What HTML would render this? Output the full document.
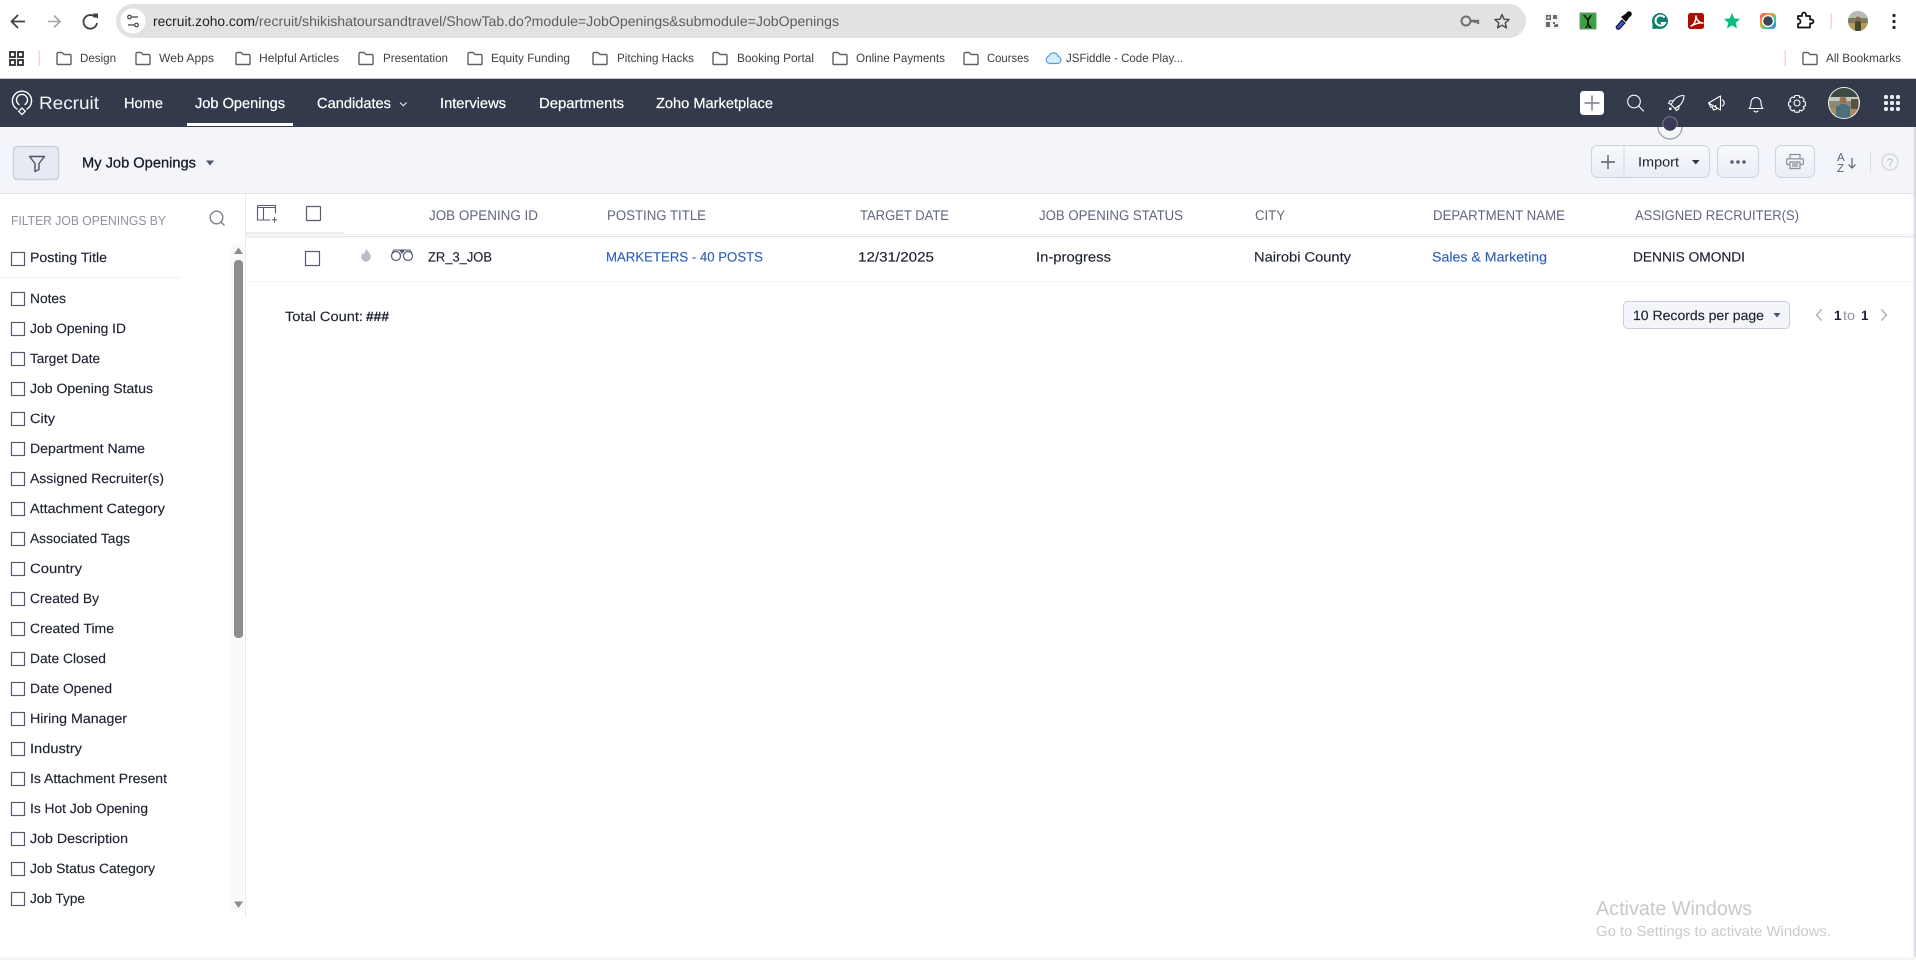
<!DOCTYPE html>
<html lang="en"><head><meta charset="utf-8"><title>Job Openings</title>
<style>
html,body{margin:0;padding:0;background:#fff;width:1916px;height:960px;overflow:hidden}
svg{display:block}
text{font-family:"Liberation Sans",sans-serif;white-space:pre}
.bm{font-size:12px;fill:#3c4043}
.nav{font-size:14.5px;fill:#fff;stroke:#fff;stroke-width:.22}
.hd{font-size:14px;fill:#60667f}
.it{font-size:13.5px;fill:#1d2230;stroke:#1d2230;stroke-width:.15}
.lnk{font-size:13.5px;fill:#2a5bb8;stroke:#2a5bb8;stroke-width:.1}
.cb{fill:#fff;stroke:#555a70;stroke-width:1.2}
.ic{fill:none;stroke:#fff;stroke-width:1.1;stroke-linecap:round;stroke-linejoin:round}
.fo{fill:none;stroke:#5f6368;stroke-width:1.4;stroke-linejoin:round}
</style></head><body>
<svg xmlns="http://www.w3.org/2000/svg" width="1916" height="960" viewBox="0 0 1916 960" shape-rendering="geometricPrecision" text-rendering="geometricPrecision">
<defs>
<symbol id="f" viewBox="0 0 16 14" overflow="visible"><path class="fo" d="M1 12.5V2.2C1 1.5 1.5 1 2.2 1H6l2 2h5.8c.7 0 1.2.5 1.2 1.2v8.3c0 .3-.3.5-.5.5h-13c-.3 0-.5-.2-.5-.5z"/></symbol>
<linearGradient id="btn" x1="0" y1="0" x2="0" y2="1"><stop offset="0" stop-color="#f8f9fc"/><stop offset="1" stop-color="#e9edf5"/></linearGradient>
<linearGradient id="edge" x1="0" y1="0" x2="1" y2="0"><stop offset="0" stop-color="#fff" stop-opacity="0"/><stop offset="1" stop-color="#c9cbd3"/></linearGradient>
<linearGradient id="rb" x1="0" y1="0" x2="1" y2="1"><stop offset="0" stop-color="#f0359a"/><stop offset=".35" stop-color="#f7a21b"/><stop offset=".65" stop-color="#37c8a0"/><stop offset="1" stop-color="#3a6cf0"/></linearGradient>
<clipPath id="av"><circle cx="1844" cy="103" r="15"/></clipPath>
<clipPath id="av2"><circle cx="1858" cy="21" r="10"/></clipPath>
</defs>
<rect width="1916" height="960" fill="#fff"/>

<!-- browser toolbar -->
<path d="M25 21.5H12M18 15l-6.5 6.5L18 28" fill="none" stroke="#3c4043" stroke-width="1.7"/>
<path d="M60 21.5H48M54 15.5l6 6-6 6" fill="none" stroke="#a3a5a8" stroke-width="1.6"/>
<path d="M95.5 17.5A6.8 6.8 0 1 0 97 23" fill="none" stroke="#3c4043" stroke-width="1.8"/><path d="M92.5 13.5h5.5v5.5z" fill="#3c4043"/>
<rect x="116" y="4" width="1410" height="34" rx="17" fill="#e2e2e2"/>
<circle cx="133" cy="21" r="12.5" fill="#fff"/>
<path d="M132 17h6M128 25h6" stroke="#3c4043" stroke-width="1.3"/><circle cx="129.500" cy="17" r="1.800" fill="none" stroke="#3c4043" stroke-width="1.200"/><circle cx="136.500" cy="25" r="1.800" fill="none" stroke="#3c4043" stroke-width="1.200"/>
<text x="153" y="26" font-size="14" fill="#1f1f1f" textLength="102" lengthAdjust="spacingAndGlyphs">recruit.zoho.com</text>
<text x="255" y="26" font-size="14" fill="#5b5e63" textLength="584" lengthAdjust="spacingAndGlyphs">/recruit/shikishatoursandtravel/ShowTab.do?module=JobOpenings&amp;submodule=JobOpenings</text>
<circle cx="1466" cy="21" r="4.500" fill="none" stroke="#6b6e72" stroke-width="2"/><path d="M1470 21h8v3M1475 21v2" fill="none" stroke="#6b6e72" stroke-width="2.400"/>
<path d="M1502 14.500l2 4.700 5.100.4-3.900 3.300 1.200 5-4.400-2.700-4.400 2.700 1.200-5-3.900-3.300 5.100-.4z" fill="none" stroke="#45484c" stroke-width="1.400" stroke-linejoin="round"/>

<!-- extensions -->
<rect x="1544" y="13" width="16" height="16" fill="#f3f3f3"/>
<path d="M1546 15h5v5h-5zM1553 15h4v4h-4zM1546 22h4v5h-4zM1553 22h2v2h-2zM1556 24h2v3h-4v-2z" fill="#6a6a6a"/><path d="M1547.500 16.500h2v2h-2z" fill="#fff"/>
<rect x="1580" y="13" width="16" height="16" fill="#35a43a" stroke="#7c8c7c"/>
<path d="M1583 15l4 5v5l-2 3h2l1-3 1 3h3l-3-4v-4l3-5h-1.500l-2.500 3h-1l-2-3z" fill="#101510"/>
<path d="M1617 29l-1-2 6-7 3 3-6 6.500z" fill="#3a55c9" stroke="#111" stroke-width="1"/><path d="M1621 17l7-5 3 3-5 7z" fill="#0d0d0d"/><circle cx="1629" cy="14" r="2.800" fill="#0d0d0d"/>
<circle cx="1660" cy="21" r="7.500" fill="#fff" stroke="#0f7f6e" stroke-width="1"/>
<path d="M1652.500 29V21a7.500 7.500 0 1 1 7.500 7.500z" fill="#0f7f6e"/><path d="M1664.500 17.500a5 5 0 1 0 .4 5.500h-4" fill="none" stroke="#fff" stroke-width="2"/>
<rect x="1688" y="13" width="16" height="16" rx="2.500" fill="#ad0b00"/>
<path d="M1691 26c3-1 5-5 5-10 0 3 3 7 7 7-3-.5-8 .5-12 3z" fill="none" stroke="#fff" stroke-width="1.500" stroke-linejoin="round"/>
<path d="M1732 13l2.300 5.500 5.900.4-4.500 3.800 1.400 5.800-5.100-3.100-5.100 3.100 1.400-5.800-4.500-3.800 5.900-.4z" fill="#08bd80"/>
<rect x="1760" y="13" width="16" height="16" rx="4" fill="url(#rb)"/><circle cx="1768" cy="21" r="5.500" fill="#3b4554" stroke="#fff" stroke-width="1.400"/>
<path d="M1798 16h4v-1.500a2 2 0 0 1 4 0V16h4v3.500h1.500a2 2 0 0 1 0 4H1810V27.500h-12V24a2.500 2.500 0 0 0 0-5z" fill="none" stroke="#111" stroke-width="1.700" stroke-linejoin="round"/>
<rect x="1830.500" y="13" width="1.500" height="16" fill="#f6d3e3"/>
<circle cx="1858" cy="21" r="10" fill="#7b7c60"/><g clip-path="url(#av2)"><rect x="1848" y="11" width="20" height="7" fill="#b5bcb4"/><rect x="1848" y="23" width="20" height="8" fill="#b89a54"/><path d="M1855 31v-9l3-2 3 2v9z" fill="#3e4a34"/><circle cx="1858" cy="19" r="2.500" fill="#8e6443"/></g>
<circle cx="1894" cy="15.500" r="1.600" fill="#222"/><circle cx="1894" cy="21.500" r="1.600" fill="#222"/><circle cx="1894" cy="27.500" r="1.600" fill="#222"/>

<!-- bookmarks -->
<g fill="none" stroke="#2a2d31" stroke-width="1.800"><rect x="10" y="52" width="5" height="5"/><rect x="18" y="52" width="5" height="5"/><rect x="10" y="60" width="5" height="5"/><rect x="18" y="60" width="5" height="5"/></g>
<rect x="38.500" y="50" width="1.500" height="16" fill="#f6d3e3"/>
<use href="#f" x="56" y="51.500" width="16" height="14"/><text class="bm" x="80" y="62" textLength="36" lengthAdjust="spacingAndGlyphs">Design</text>
<use href="#f" x="135" y="51.500" width="16" height="14"/><text class="bm" x="159" y="62" textLength="55" lengthAdjust="spacingAndGlyphs">Web Apps</text>
<use href="#f" x="235" y="51.500" width="16" height="14"/><text class="bm" x="259" y="62" textLength="80" lengthAdjust="spacingAndGlyphs">Helpful Articles</text>
<use href="#f" x="358" y="51.500" width="16" height="14"/><text class="bm" x="383" y="62" textLength="65" lengthAdjust="spacingAndGlyphs">Presentation</text>
<use href="#f" x="467" y="51.500" width="16" height="14"/><text class="bm" x="491" y="62" textLength="79" lengthAdjust="spacingAndGlyphs">Equity Funding</text>
<use href="#f" x="592" y="51.500" width="16" height="14"/><text class="bm" x="617" y="62" textLength="77" lengthAdjust="spacingAndGlyphs">Pitching Hacks</text>
<use href="#f" x="712" y="51.500" width="16" height="14"/><text class="bm" x="737" y="62" textLength="77" lengthAdjust="spacingAndGlyphs">Booking Portal</text>
<use href="#f" x="832" y="51.500" width="16" height="14"/><text class="bm" x="856" y="62" textLength="89" lengthAdjust="spacingAndGlyphs">Online Payments</text>
<use href="#f" x="963" y="51.500" width="16" height="14"/><text class="bm" x="987" y="62" textLength="42" lengthAdjust="spacingAndGlyphs">Courses</text>
<path d="M1050 63.500h7.500a3.500 3.500 0 0 0 .8-6.900 5 5 0 0 0-9.500-.5 3.800 3.800 0 0 0 1.200 7.400z" fill="#d8ecfa" stroke="#4b9be0" stroke-width="1.200"/>
<text class="bm" x="1066" y="62" textLength="117" lengthAdjust="spacingAndGlyphs">JSFiddle - Code Play...</text>
<rect x="1784.500" y="50" width="1.500" height="16" fill="#f6d3e3"/>
<use href="#f" x="1802" y="51.500" width="16" height="14"/><text class="bm" x="1826" y="62" textLength="75" lengthAdjust="spacingAndGlyphs">All Bookmarks</text>

<!-- nav -->
<rect x="0" y="78" width="1916" height="1" fill="#c4c4c4"/>
<rect x="0" y="79" width="1916" height="48" fill="#323a4b"/>
<path d="M17 109a9.600 9.600 0 1 1 10 0M19 104.500a5.500 5.500 0 1 1 6 0" fill="none" stroke="#fff" stroke-width="1.400" stroke-linecap="round"/>
<path d="M22 108l3.300 3.300-3.300 3.300-3.300-3.300z" fill="none" stroke="#fff" stroke-width="1.300"/>
<text x="39" y="109" font-size="18" fill="#f4f5f7" textLength="60" lengthAdjust="spacingAndGlyphs">Recruit</text>
<text class="nav" x="124" y="108" textLength="39" lengthAdjust="spacingAndGlyphs">Home</text>
<text class="nav" x="195" y="108" textLength="90" lengthAdjust="spacingAndGlyphs">Job Openings</text>
<rect x="187" y="123" width="106" height="3" fill="#fff"/>
<text class="nav" x="317" y="108" textLength="74" lengthAdjust="spacingAndGlyphs">Candidates</text>
<path d="M400 102.500l3.300 3.300 3.300-3.300" fill="none" stroke="#dfe2e8" stroke-width="1.200"/>
<text class="nav" x="440" y="108" textLength="66" lengthAdjust="spacingAndGlyphs">Interviews</text>
<text class="nav" x="539" y="108" textLength="85" lengthAdjust="spacingAndGlyphs">Departments</text>
<text class="nav" x="656" y="108" textLength="117" lengthAdjust="spacingAndGlyphs">Zoho Marketplace</text>

<rect x="1580" y="91" width="24" height="24" rx="3.500" fill="#fff"/>
<path d="M1592 95.500v15M1584.500 103h15" stroke="#8a8e98" stroke-width="1.700"/>
<circle cx="1634" cy="101.500" r="6.300" class="ic"/><path d="M1638.500 106l5 5" class="ic"/>
<path class="ic" d="M1684 95.500c-4 0-7.500 1.500-10 4.500l-3 4.500 4 4 4.500-3c2.800-2.600 4.500-6 4.500-10zM1673.500 100.500l-3.500.3-1.500 2.500 2.500 1.200M1679 105.500l-.3 3.500-2.500 1.500-1.200-2.500"/><rect x="1669" y="107.500" width="2.500" height="2.500" fill="#fff"/>
<path class="ic" d="M1708.500 103l12-7v14zM1708.500 103l2.500 4.500M1722.500 100a3.500 3.500 0 0 1 0 6M1712 106.500l1.500 3.500 3-1-1-3.500"/>
<path class="ic" d="M1749 108.500c1.500-1.500 2-3 2-6a5 5 0 0 1 10 0c0 3 .5 4.500 2 6zM1754 111c1 1.300 3 1.300 4 0"/>
<circle cx="1797" cy="103" r="3" class="ic"/>
<path class="ic" d="M1795 95.500h4l.7 2.200 2-.8 2.500 2.500-1 2 2.200 .7v3.700l-2.200.7 1 2-2.500 2.500-2-1-.7 2.200h-4l-.7-2.200-2 1-2.500-2.500 1-2-2.200-.7v-3.700l2.200-.7-1-2 2.500-2.500 2 .8z"/>
<circle cx="1844" cy="103" r="16" fill="#f2f2f2"/><circle cx="1844" cy="103" r="15" fill="#8b8a76"/>
<g clip-path="url(#av)"><rect x="1829" y="88" width="30" height="9" fill="#3b4a45"/><rect x="1829" y="97" width="30" height="4" fill="#c5c9c0"/><rect x="1829" y="108" width="30" height="11" fill="#a98d5e"/><path d="M1836 119v-12l5-3h4l5 3v12z" fill="#4c6f7c"/><circle cx="1843" cy="100" r="3.500" fill="#9b6f4d"/><rect x="1851" y="99" width="7" height="10" fill="#5b5140"/></g>
<g fill="#e9eaee"><rect x="1884" y="95" width="4" height="4" rx="1.500"/><rect x="1890" y="95" width="4" height="4" rx="1.500"/><rect x="1896" y="95" width="4" height="4" rx="1.500"/><rect x="1884" y="101" width="4" height="4" rx="1.500"/><rect x="1890" y="101" width="4" height="4" rx="1.500"/><rect x="1896" y="101" width="4" height="4" rx="1.500"/><rect x="1884" y="107" width="4" height="4" rx="1.500"/><rect x="1890" y="107" width="4" height="4" rx="1.500"/><rect x="1896" y="107" width="4" height="4" rx="1.500"/></g>

<!-- subheader -->
<rect x="0" y="127" width="1916" height="66" fill="#f3f5fa"/>
<rect x="0" y="193" width="1916" height="1" fill="#dfe3ea"/>
<path d="M1658 127a12 12 0 0 0 24 0" fill="#f3f5fa" stroke="#9a9ca6" stroke-width="1.200"/>
<circle cx="1670" cy="124" r="7.800" fill="#fff" opacity=".35"/>
<circle cx="1670" cy="124" r="6.800" fill="#393a5a"/>
<rect x="13.500" y="146.500" width="45" height="33" rx="4" fill="#e6eaf3" stroke="#c7d0de" stroke-width="1.500"/>
<path d="M29.500 156.500h15l-5.500 7v6l-4 2v-8z" fill="none" stroke="#4d5468" stroke-width="1.400" stroke-linejoin="round"/>
<text x="82" y="167.500" font-size="14.500" fill="#161a26" stroke="#161a26" stroke-width=".3" textLength="114" lengthAdjust="spacingAndGlyphs">My Job Openings</text>
<path d="M206 160.500h8l-4 5z" fill="#4d5468"/>

<rect x="1591.500" y="145.500" width="118" height="32" rx="6" fill="url(#btn)" stroke="#ccd2df" stroke-width="1"/>
<rect x="1623.500" y="146" width="1" height="31" fill="#d3d8e3"/>
<path d="M1608 155v14M1601 162h14" stroke="#5a6176" stroke-width="1.400"/>
<text x="1638" y="166.500" font-size="13.500" fill="#1d2230" textLength="41" lengthAdjust="spacingAndGlyphs">Import</text>
<path d="M1692 160h7.500l-3.750 4.500z" fill="#2f3548"/>
<rect x="1717.500" y="145.500" width="41" height="32" rx="6" fill="url(#btn)" stroke="#ccd2df" stroke-width="1"/>
<circle cx="1732" cy="162" r="1.800" fill="#5a6176"/><circle cx="1738" cy="162" r="1.800" fill="#5a6176"/><circle cx="1744" cy="162" r="1.800" fill="#5a6176"/>
<rect x="1775.500" y="145.500" width="39" height="32" rx="6" fill="url(#btn)" stroke="#ccd2df" stroke-width="1"/>
<path d="M1790 159v-4.500h10v4.500M1790 164.500h-2.500a.8.8 0 0 1-.8-.8v-4c0-.5.3-.8.8-.8h15c.5 0 .8.3.8.8v4c0 .4-.3.8-.8.8H1800M1790 162h10v6.500h-10zM1792 164h6M1792 166h6" fill="none" stroke="#8a8f9e" stroke-width="1.200"/>
<text x="1837" y="161" font-size="11.500" fill="#5a6176">A</text><text x="1837" y="172" font-size="11.500" fill="#5a6176">Z</text>
<path d="M1852 158v10M1848.500 164.500l3.500 3.500 3.500-3.500" fill="none" stroke="#5a6176" stroke-width="1.200"/>
<rect x="1870" y="152" width="1" height="20" fill="#d8dce5"/>
<circle cx="1890" cy="162" r="8" fill="none" stroke="#d0d3da" stroke-width="1.200"/>
<text x="1886.800" y="166.500" font-size="11.500" fill="#b5b8c0">?</text>

<!-- sidebar -->
<rect x="245" y="194" width="1" height="723" fill="#e9eaee"/>
<text x="11" y="225" font-size="13" fill="#8f939e" textLength="155" lengthAdjust="spacingAndGlyphs">FILTER JOB OPENINGS BY</text>
<circle cx="216.500" cy="217.500" r="6.300" fill="none" stroke="#7c808c" stroke-width="1.400"/><path d="M221 222l3.500 3.500" stroke="#7c808c" stroke-width="1.400"/>
<rect x="231" y="244" width="13" height="668" fill="#fafafa"/>
<path d="M234 254l4.500-6.500 4.500 6.500z" fill="#8d8d8d"/>
<rect x="234" y="260" width="9" height="378" rx="4" fill="#8d8d8d"/>
<path d="M234 901.500l4.500 6.500 4.500-6.500z" fill="#8d8d8d"/>
<rect x="0" y="277" width="181" height="1" fill="#f0f1f3"/>

<rect class="cb" x="11.500" y="252.500" width="13" height="13"/><text class="it" x="30" y="262" textLength="77" lengthAdjust="spacingAndGlyphs">Posting Title</text>
<rect class="cb" x="11.500" y="292.500" width="13" height="13"/><text class="it" x="30" y="303" textLength="36" lengthAdjust="spacingAndGlyphs">Notes</text>
<rect class="cb" x="11.500" y="322.500" width="13" height="13"/><text class="it" x="30" y="333" textLength="96" lengthAdjust="spacingAndGlyphs">Job Opening ID</text>
<rect class="cb" x="11.500" y="352.500" width="13" height="13"/><text class="it" x="30" y="363" textLength="70" lengthAdjust="spacingAndGlyphs">Target Date</text>
<rect class="cb" x="11.500" y="382.500" width="13" height="13"/><text class="it" x="30" y="393" textLength="123" lengthAdjust="spacingAndGlyphs">Job Opening Status</text>
<rect class="cb" x="11.500" y="412.500" width="13" height="13"/><text class="it" x="30" y="423" textLength="25" lengthAdjust="spacingAndGlyphs">City</text>
<rect class="cb" x="11.500" y="442.500" width="13" height="13"/><text class="it" x="30" y="453" textLength="115" lengthAdjust="spacingAndGlyphs">Department Name</text>
<rect class="cb" x="11.500" y="472.500" width="13" height="13"/><text class="it" x="30" y="483" textLength="134" lengthAdjust="spacingAndGlyphs">Assigned Recruiter(s)</text>
<rect class="cb" x="11.500" y="502.500" width="13" height="13"/><text class="it" x="30" y="513" textLength="135" lengthAdjust="spacingAndGlyphs">Attachment Category</text>
<rect class="cb" x="11.500" y="532.500" width="13" height="13"/><text class="it" x="30" y="543" textLength="100" lengthAdjust="spacingAndGlyphs">Associated Tags</text>
<rect class="cb" x="11.500" y="562.500" width="13" height="13"/><text class="it" x="30" y="573" textLength="52" lengthAdjust="spacingAndGlyphs">Country</text>
<rect class="cb" x="11.500" y="592.500" width="13" height="13"/><text class="it" x="30" y="603" textLength="69" lengthAdjust="spacingAndGlyphs">Created By</text>
<rect class="cb" x="11.500" y="622.500" width="13" height="13"/><text class="it" x="30" y="633" textLength="84" lengthAdjust="spacingAndGlyphs">Created Time</text>
<rect class="cb" x="11.500" y="652.500" width="13" height="13"/><text class="it" x="30" y="663" textLength="76" lengthAdjust="spacingAndGlyphs">Date Closed</text>
<rect class="cb" x="11.500" y="682.500" width="13" height="13"/><text class="it" x="30" y="693" textLength="82" lengthAdjust="spacingAndGlyphs">Date Opened</text>
<rect class="cb" x="11.500" y="712.500" width="13" height="13"/><text class="it" x="30" y="723" textLength="97" lengthAdjust="spacingAndGlyphs">Hiring Manager</text>
<rect class="cb" x="11.500" y="742.500" width="13" height="13"/><text class="it" x="30" y="753" textLength="52" lengthAdjust="spacingAndGlyphs">Industry</text>
<rect class="cb" x="11.500" y="772.500" width="13" height="13"/><text class="it" x="30" y="783" textLength="137" lengthAdjust="spacingAndGlyphs">Is Attachment Present</text>
<rect class="cb" x="11.500" y="802.500" width="13" height="13"/><text class="it" x="30" y="813" textLength="118" lengthAdjust="spacingAndGlyphs">Is Hot Job Opening</text>
<rect class="cb" x="11.500" y="832.500" width="13" height="13"/><text class="it" x="30" y="843" textLength="98" lengthAdjust="spacingAndGlyphs">Job Description</text>
<rect class="cb" x="11.500" y="862.500" width="13" height="13"/><text class="it" x="30" y="873" textLength="125" lengthAdjust="spacingAndGlyphs">Job Status Category</text>
<rect class="cb" x="11.500" y="892.500" width="13" height="13"/><text class="it" x="30" y="903" textLength="55" lengthAdjust="spacingAndGlyphs">Job Type</text>

<!-- table header -->
<path d="M257.500 205.500h18v8M257.500 205.500v14.500h13M257.500 207.500h18M263.500 207.500v12.500" fill="none" stroke="#555a70" stroke-width="1.100"/>
<path d="M274.500 217v5.500M272 219.800h5" stroke="#555a70" stroke-width="1"/>
<rect class="cb" x="306.500" y="206.500" width="14" height="14" rx="1"/>
<text class="hd" x="429" y="220" textLength="109" lengthAdjust="spacingAndGlyphs">JOB OPENING ID</text>
<text class="hd" x="607" y="220" textLength="99" lengthAdjust="spacingAndGlyphs">POSTING TITLE</text>
<text class="hd" x="860" y="220" textLength="89" lengthAdjust="spacingAndGlyphs">TARGET DATE</text>
<text class="hd" x="1039" y="220" textLength="144" lengthAdjust="spacingAndGlyphs">JOB OPENING STATUS</text>
<text class="hd" x="1255" y="220" textLength="30" lengthAdjust="spacingAndGlyphs">CITY</text>
<text class="hd" x="1433" y="220" textLength="132" lengthAdjust="spacingAndGlyphs">DEPARTMENT NAME</text>
<text class="hd" x="1635" y="220" textLength="164" lengthAdjust="spacingAndGlyphs">ASSIGNED RECRUITER(S)</text>
<rect x="246" y="232" width="99" height="1.500" fill="#eceef1"/>
<rect x="246" y="234" width="1670" height="1" fill="#eceef1"/>
<rect x="246" y="236" width="1670" height="1.500" fill="#e7e9ed"/>

<!-- row -->
<rect class="cb" x="305.500" y="251.500" width="14" height="14"/>
<path d="M366.500 249c.5 2.500 4.300 4 4.300 7.800a4.800 4.800 0 0 1-9.600 0c0-2 1-3 1.800-4 .2 1 .6 1.500 1.200 1.800.4-2 .8-3.800 2.300-5.600z" fill="#b8bcc8"/>
<circle cx="396" cy="256" r="4.500" fill="none" stroke="#555a70" stroke-width="1.200"/><circle cx="408" cy="256" r="4.500" fill="none" stroke="#555a70" stroke-width="1.200"/><path d="M399 250h6l-3 4z" fill="#555a70"/><path d="M392 253l2-3h16l2 3" fill="none" stroke="#555a70" stroke-width="1"/>
<text class="it" x="428" y="261.500" textLength="64" lengthAdjust="spacingAndGlyphs">ZR_3_JOB</text>
<text class="lnk" x="606" y="261.500" textLength="157" lengthAdjust="spacingAndGlyphs">MARKETERS - 40 POSTS</text>
<text class="it" x="858" y="261.500" textLength="76" lengthAdjust="spacingAndGlyphs">12/31/2025</text>
<text class="it" x="1036" y="261.500" textLength="75" lengthAdjust="spacingAndGlyphs">In-progress</text>
<text class="it" x="1254" y="261.500" textLength="97" lengthAdjust="spacingAndGlyphs">Nairobi County</text>
<text class="lnk" x="1432" y="261.500" textLength="115" lengthAdjust="spacingAndGlyphs">Sales &amp; Marketing</text>
<text class="it" x="1633" y="261.500" textLength="112" lengthAdjust="spacingAndGlyphs">DENNIS OMONDI</text>
<rect x="246" y="281" width="1670" height="1" fill="#f1f2f4"/>

<!-- footer of table -->
<text class="it" x="285" y="321" textLength="78" lengthAdjust="spacingAndGlyphs">Total Count:</text>
<text class="it" x="366" y="321" font-weight="700" textLength="23" lengthAdjust="spacingAndGlyphs">###</text>
<rect x="1623.500" y="301.500" width="166" height="27" rx="4" fill="#f3f5fa" stroke="#c9cfdb" stroke-width="1"/>
<text class="it" x="1633" y="320" textLength="131" lengthAdjust="spacingAndGlyphs">10 Records per page</text>
<path d="M1773.500 313h7l-3.500 4.500z" fill="#4d5468"/>
<path d="M1821.500 309.500l-5 5.500 5 5.500M1881.500 309.500l5 5.500-5 5.500" fill="none" stroke="#aeb2bb" stroke-width="1.500"/>
<text x="1834" y="320" font-size="13.500" font-weight="700" fill="#1d2230">1</text>
<text x="1843" y="320" font-size="13.500" fill="#8f939e" textLength="12" lengthAdjust="spacingAndGlyphs">to</text>
<text x="1861" y="320" font-size="13.500" font-weight="700" fill="#1d2230">1</text>

<!-- watermark -->
<text x="1596" y="915" font-size="20" fill="#c9c9c9" textLength="156" lengthAdjust="spacingAndGlyphs">Activate Windows</text>
<text x="1596" y="936" font-size="14.500" fill="#cacaca" textLength="235" lengthAdjust="spacingAndGlyphs">Go to Settings to activate Windows.</text>

<rect x="1911" y="127" width="5" height="830" fill="url(#edge)"/>
<rect x="0" y="957" width="1916" height="3" fill="#f6f6f7"/>
</svg>
</body></html>
